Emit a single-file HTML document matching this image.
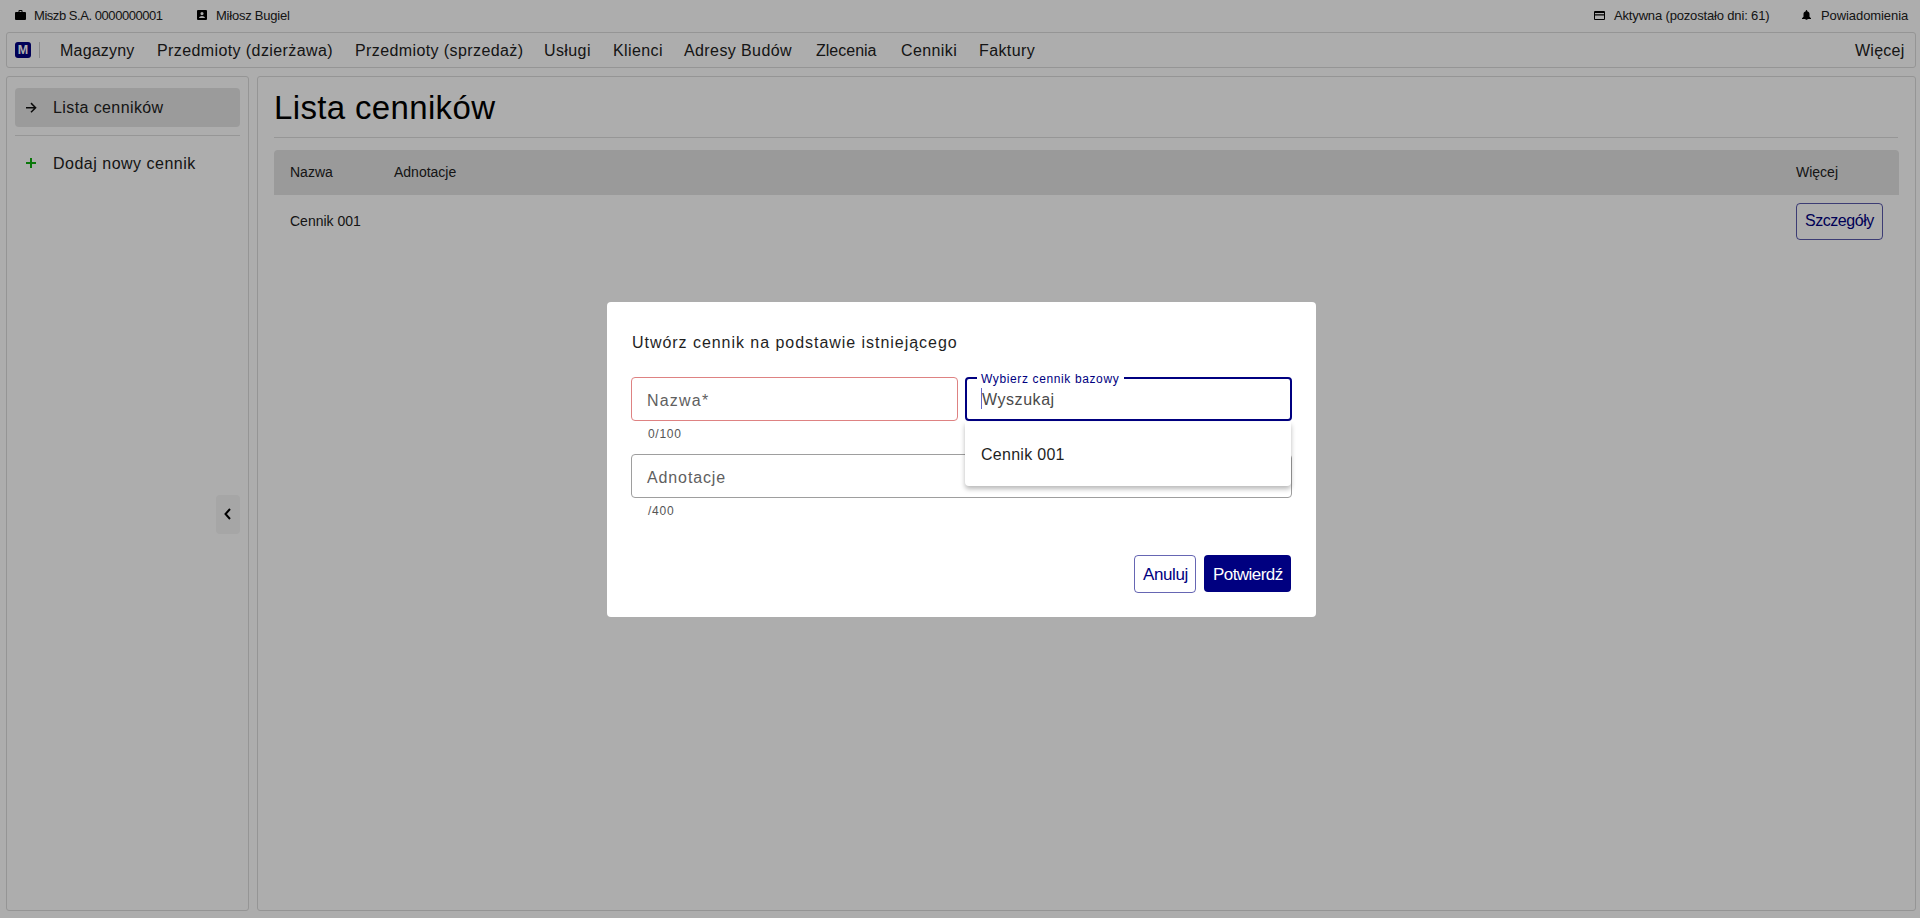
<!DOCTYPE html>
<html><head><meta charset="utf-8">
<style>
*{box-sizing:border-box;margin:0;padding:0}
html,body{width:1920px;height:918px;overflow:hidden;background:#fff;font-family:"Liberation Sans",sans-serif;color:#212121}
.abs{position:absolute}
.t{position:absolute;white-space:nowrap;line-height:1}
#overlay{position:absolute;left:0;top:0;width:1920px;height:918px;background:rgba(0,0,0,0.32)}
.box{position:absolute;border:1px solid #dcdcdc;border-radius:3px;background:#fff}
</style></head><body>
<!-- top bar -->
<svg class="abs" style="left:15px;top:10px" width="11" height="10" viewBox="0 0 11 10"><path d="M3.5 2V1a1 1 0 0 1 1-1h2a1 1 0 0 1 1 1v1H10a1 1 0 0 1 1 1v6a1 1 0 0 1-1 1H1a1 1 0 0 1-1-1V3a1 1 0 0 1 1-1zM4.5 1v1h2V1z" fill="#000"/></svg>
<div class="t" style="left:34px;top:9px;font-size:13px;letter-spacing:-0.45px">Miszb S.A. 0000000001</div>
<svg class="abs" style="left:197px;top:10px" width="10" height="10" viewBox="0 0 10 10"><path d="M1 0h8a1 1 0 0 1 1 1v8a1 1 0 0 1-1 1H1a1 1 0 0 1-1-1V1a1 1 0 0 1 1-1zM5 2a1.6 1.6 0 1 0 0 3.2A1.6 1.6 0 0 0 5 2zM2 8h6c0-1.3-1.8-2-3-2s-3 .7-3 2z" fill="#000" fill-rule="evenodd"/></svg>
<div class="t" style="left:216px;top:9px;font-size:13px;letter-spacing:-0.23px">Miłosz Bugiel</div>

<svg class="abs" style="left:1594px;top:11px" width="11" height="9" viewBox="0 0 11 9"><path d="M1 0h9a1 1 0 0 1 1 1v7a1 1 0 0 1-1 1H1a1 1 0 0 1-1-1V1a1 1 0 0 1 1-1zM1 2v1.3h9V2zM1 4.5V8h9V4.5z" fill="#000" fill-rule="evenodd"/></svg>
<div class="t" style="left:1614px;top:9px;font-size:13px;letter-spacing:-0.16px">Aktywna (pozostało dni: 61)</div>
<svg class="abs" style="left:1802px;top:10px" width="9" height="10" viewBox="0 0 9 10"><path d="M4.5 0a.7.7 0 0 1 .7.7v.5C6.6 1.5 7.5 2.7 7.5 4v2.8L9 8.3V9H0v-.7l1.5-1.5V4c0-1.3.9-2.5 2.3-2.8V.7A.7.7 0 0 1 4.5 0zM3.5 9.3h2a1 1 0 0 1-2 0z" fill="#000"/></svg>
<div class="t" style="left:1821px;top:9px;font-size:13px;letter-spacing:-0.08px">Powiadomienia</div>

<!-- nav -->
<div class="box" style="left:6px;top:32px;width:1910px;height:36px"></div>
<div class="abs" style="left:15px;top:42px;width:16px;height:16px;background:#000080;border-radius:3px;color:#fff;font-weight:bold;font-size:12.5px;text-align:center;line-height:17px">M</div>
<div class="abs" style="left:39px;top:42px;width:1px;height:16px;background:#ccc"></div>
<div class="t" style="left:60px;top:43px;font-size:16px;letter-spacing:0.2px">Magazyny</div>
<div class="t" style="left:157px;top:43px;font-size:16px;letter-spacing:0.4px">Przedmioty (dzierżawa)</div>
<div class="t" style="left:355px;top:43px;font-size:16px;letter-spacing:0.4px">Przedmioty (sprzedaż)</div>
<div class="t" style="left:544px;top:43px;font-size:16px;letter-spacing:0.4px">Usługi</div>
<div class="t" style="left:613px;top:43px;font-size:16px;letter-spacing:0.4px">Klienci</div>
<div class="t" style="left:684px;top:43px;font-size:16px;letter-spacing:0.4px">Adresy Budów</div>
<div class="t" style="left:816px;top:43px;font-size:16px;letter-spacing:0px">Zlecenia</div>
<div class="t" style="left:901px;top:43px;font-size:16px;letter-spacing:0.4px">Cenniki</div>
<div class="t" style="left:979px;top:43px;font-size:16px;letter-spacing:0.4px">Faktury</div>
<div class="t" style="left:1855px;top:43px;font-size:16px;letter-spacing:0.25px">Więcej</div>

<!-- sidebar -->
<div class="box" style="left:6px;top:76px;width:243px;height:835px"></div>
<div class="abs" style="left:15px;top:88px;width:225px;height:38.5px;background:#e5e5e5;border-radius:4px"></div>
<svg class="abs" style="left:25px;top:102px" width="12" height="12" viewBox="0 0 12 12"><path d="M1 5.7h9.6M6 1.1l4.6 4.6L6 10.3" stroke="#111" stroke-width="1.5" fill="none"/></svg>
<div class="t" style="left:53px;top:100px;font-size:16px;letter-spacing:0.4px">Lista cenników</div>
<div class="abs" style="left:15px;top:135px;width:225px;height:1px;background:#ddd"></div>
<svg class="abs" style="left:26px;top:158px" width="10" height="10" viewBox="0 0 10 10"><path d="M5 0v10M0 5h10" stroke="#10b010" stroke-width="2"/></svg>
<div class="t" style="left:53px;top:156px;font-size:16px;letter-spacing:0.5px">Dodaj nowy cennik</div>
<div class="abs" style="left:216px;top:495px;width:24px;height:39px;background:#f5f5f5;border-radius:4px"></div>
<svg class="abs" style="left:223px;top:508px" width="10" height="12" viewBox="0 0 10 12"><path d="M7 1L2.5 6 7 11" stroke="#000" stroke-width="2" fill="none"/></svg>

<!-- main -->
<div class="box" style="left:257px;top:76px;width:1659px;height:835px"></div>
<div class="t" style="left:274px;top:91px;font-size:33px;letter-spacing:0.35px;color:#000">Lista cenników</div>
<div class="abs" style="left:274px;top:137px;width:1624px;height:1px;background:#ddd"></div>
<div class="abs" style="left:274px;top:150px;width:1625px;height:45px;background:#e3e3e3;border-radius:4px 4px 0 0"></div>
<div class="t" style="left:290px;top:165px;font-size:14px">Nazwa</div>
<div class="t" style="left:394px;top:165px;font-size:14px">Adnotacje</div>
<div class="t" style="left:1796px;top:165px;font-size:14px">Więcej</div>
<div class="t" style="left:290px;top:214px;font-size:14px">Cennik 001</div>
<div class="abs" style="left:1796px;top:203px;width:87px;height:37px;border:1px solid rgba(0,0,128,0.65);border-radius:4px"></div>
<div class="t" style="left:1805px;top:213px;font-size:16px;color:#000080;letter-spacing:-0.45px">Szczegóły</div>

<div id="overlay"></div>

<!-- dialog -->
<div class="abs" style="left:607px;top:302px;width:709px;height:315px;background:#fff;border-radius:4px"></div>
<div class="t" style="left:632px;top:335px;font-size:16px;letter-spacing:0.96px;color:#1f1f1f">Utwórz cennik na podstawie istniejącego</div>
<div class="abs" style="left:631px;top:377px;width:327px;height:44px;border:1px solid #de8282;border-radius:4px"></div>
<div class="t" style="left:647px;top:393px;font-size:16px;color:#5f5f5f;letter-spacing:1.2px">Nazwa*</div>
<div class="t" style="left:648px;top:428px;font-size:12px;color:#555;letter-spacing:0.7px">0/100</div>
<div class="abs" style="left:631px;top:454px;width:661px;height:44px;border:1px solid #9e9e9e;border-radius:4px"></div>
<div class="t" style="left:647px;top:470px;font-size:16px;color:#5f5f5f;letter-spacing:0.88px">Adnotacje</div>
<div class="t" style="left:648px;top:505px;font-size:12px;color:#555;letter-spacing:0.75px">/400</div>

<div class="abs" style="left:965px;top:377px;width:327px;height:44px;border:2px solid #000080;border-radius:4px"></div>
<div class="abs" style="left:977px;top:372px;width:147px;height:10px;background:#fff"></div>
<div class="t" style="left:981px;top:373px;font-size:12px;color:#000080;letter-spacing:0.62px">Wybierz cennik bazowy</div>
<div class="abs" style="left:981px;top:388px;width:1px;height:21px;background:#6a6ac8"></div>
<div class="t" style="left:982px;top:392px;font-size:16px;color:#4a4a4a;letter-spacing:0.55px">Wyszukaj</div>
<div class="abs" style="left:965px;top:422px;width:326px;height:64px;background:#fff;border-radius:0 0 4px 4px;box-shadow:0 3px 5px rgba(0,0,0,0.28)"></div>
<div class="t" style="left:981px;top:447px;font-size:16px;color:#1f1f1f;letter-spacing:0.28px">Cennik 001</div>

<div class="abs" style="left:1134px;top:555px;width:62px;height:38px;border:1px solid rgba(0,0,128,0.6);border-radius:4px"></div>
<div class="t" style="left:1143px;top:566px;font-size:17px;color:#000080;letter-spacing:-0.4px">Anuluj</div>
<div class="abs" style="left:1204px;top:555px;width:87px;height:37px;background:#000080;border-radius:4px"></div>
<div class="t" style="left:1213px;top:566px;font-size:17px;color:#fff;letter-spacing:-0.55px">Potwierdź</div>
</body></html>
